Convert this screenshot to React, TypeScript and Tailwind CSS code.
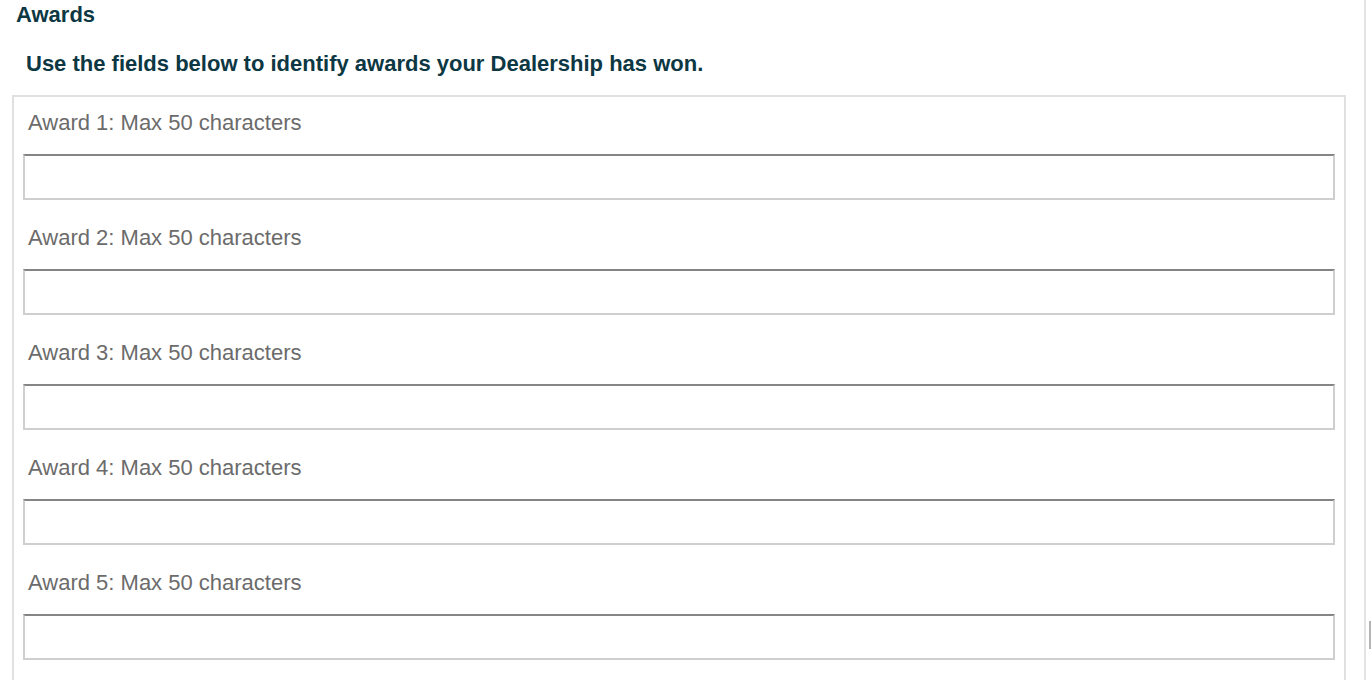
import React from 'react'

const fields = [1, 2, 3, 4, 5]

const App: React.FC = () => {
  return (
    <div className="relative h-[680px] w-[1372px] overflow-hidden bg-white font-['Helvetica','Liberation_Sans',Arial,sans-serif]">
      <div className="h-[680px] w-[1366px] border-r-2 border-[#e4e4e4]">
        <h2 className="pl-[16px] pt-[2px] text-[22px] font-bold leading-[26px] text-[#0c3743]">Awards</h2>
        <p className="mt-[23px] pl-[26px] text-[22px] font-bold leading-[26px] text-[#0c3743]">
          Use the fields below to identify awards your Dealership has won.
        </p>
        <div className="ml-[12px] mt-[18px] w-[1334px] border-x-2 border-t-2 border-[#e0e0e0] px-[9px] pb-[20px] pt-[13px]">
          {fields.map(n => (
            <div key={n} className="mb-[25px]">
              <label className="mb-[18px] ml-[5px] block text-[22px] leading-[26px] text-[#6b6b6b]">
                Award {n}: Max 50 characters
              </label>
              <input
                type="text"
                className="block h-[46px] w-[1312px] border-2 border-[#cfcfcf] border-t-[#858585] bg-white px-2 text-[20px] outline-none"
              />
            </div>
          ))}
        </div>
      </div>
      <div className="absolute left-[1369px] top-[621px] h-[28px] w-[2px] bg-[#b5b5b5]" />
    </div>
  )
}

export default App
